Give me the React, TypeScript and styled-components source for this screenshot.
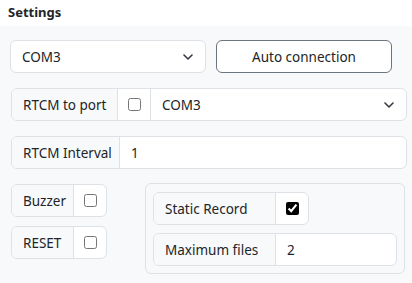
import * as React from "react";
import styled, { createGlobalStyle } from "styled-components";

const GlobalStyle = createGlobalStyle`
  html, body {
    margin: 0;
    padding: 0;
    background: #f8f9fa;
    font-family: "Segoe UI", "Noto Sans", "Open Sans", sans-serif;
    color: #212529;
  }
`;

const Page = styled.div`
  width: 412px;
  height: 283px;
  overflow: hidden;
  background: #f8f9fa;
`;

const Header = styled.div`
  height: 26px;
  background: #ffffff;
  padding-left: 8px;
  font-size: 13px;
  font-weight: 700;
  line-height: 24px;
`;

const Body = styled.div`
  display: flex;
  flex-direction: column;
  gap: 15px;
  padding: 14px 5px 0 11px;
`;

const Row = styled.div<{ $shift?: number }>`
  display: flex;
  gap: 10px;
  margin-left: ${(p) => p.$shift ?? 0}px;
`;

const Group = styled.div<{ $width?: number }>`
  display: flex;
  height: 33px;
  width: ${(p) => (p.$width ? `${p.$width}px` : "100%")};
  flex: none;
  box-sizing: border-box;
  border: 1px solid #dee2e6;
  border-radius: 6px;
  overflow: hidden;
  background: #ffffff;
  font-size: 13.5px;
`;

const Label = styled.div<{ $width: number }>`
  display: flex;
  align-items: center;
  width: ${(p) => p.$width}px;
  flex: none;
  box-sizing: border-box;
  padding-left: 11px;
  background: #f8f9fa;
  border-right: 1px solid #dee2e6;
  white-space: nowrap;
`;

const Cell = styled.div<{ $grow?: boolean }>`
  display: flex;
  align-items: center;
  justify-content: ${(p) => (p.$grow ? "space-between" : "center")};
  flex: ${(p) => (p.$grow ? "1" : "none")};
  width: ${(p) => (p.$grow ? "auto" : "33px")};
  box-sizing: border-box;
  padding: ${(p) => (p.$grow ? "0 12px 0 11px" : "0")};
  border-right: 1px solid #dee2e6;
  &:last-child {
    border-right: none;
  }
`;

const Check = styled.input.attrs({ type: "checkbox" })`
  width: 13px;
  height: 13px;
  margin: 0;
  accent-color: #000000;
`;

const Button = styled.button`
  width: 176px;
  height: 33px;
  box-sizing: border-box;
  border: 1px solid #6c757d;
  border-radius: 6px;
  background: #ffffff;
  color: #212529;
  font-family: inherit;
  font-size: 13.5px;
`;

const Lower = styled.div`
  display: flex;
  align-items: flex-start;
  gap: 38px;
  margin-top: -1px;
`;

const Column = styled.div`
  display: flex;
  flex-direction: column;
  gap: 9px;
  padding-top: 1px;
`;

const Card = styled.div`
  width: 260px;
  box-sizing: border-box;
  padding: 8px 7px 7px 7px;
  border: 1px solid #dee2e6;
  border-radius: 6px;
  display: flex;
  flex-direction: column;
  gap: 8px;
`;

const Chevron = () => (
  <svg width="10" height="6" viewBox="0 0 10 6" fill="none">
    <path d="M1 1l4 4 4-4" stroke="#343a40" strokeWidth="1.6" strokeLinecap="round" strokeLinejoin="round" />
  </svg>
);

export default function App() {
  return (
    <Page>
      <GlobalStyle />
      <Header>Settings</Header>
      <Body>
        <Row $shift={-1}>
          <Group $width={196}>
            <Cell $grow>
              COM3
              <Chevron />
            </Cell>
          </Group>
          <Button>Auto connection</Button>
        </Row>
        <Row>
          <Group>
            <Label $width={106}>RTCM to port</Label>
            <Cell>
              <Check />
            </Cell>
            <Cell $grow>
              COM3
              <Chevron />
            </Cell>
          </Group>
        </Row>
        <Row>
          <Group>
            <Label $width={108}>RTCM Interval</Label>
            <Cell $grow>1</Cell>
          </Group>
        </Row>
        <Lower>
          <Column>
            <Group $width={96}>
              <Label $width={62}>Buzzer</Label>
              <Cell>
                <Check />
              </Cell>
            </Group>
            <Group $width={96}>
              <Label $width={62}>RESET</Label>
              <Cell>
                <Check />
              </Cell>
            </Group>
          </Column>
          <Card>
            <Group $width={156}>
              <Label $width={122}>Static Record</Label>
              <Cell>
                <Check defaultChecked />
              </Cell>
            </Group>
            <Group>
              <Label $width={122}>Maximum files</Label>
              <Cell $grow>2</Cell>
            </Group>
          </Card>
        </Lower>
      </Body>
    </Page>
  );
}
